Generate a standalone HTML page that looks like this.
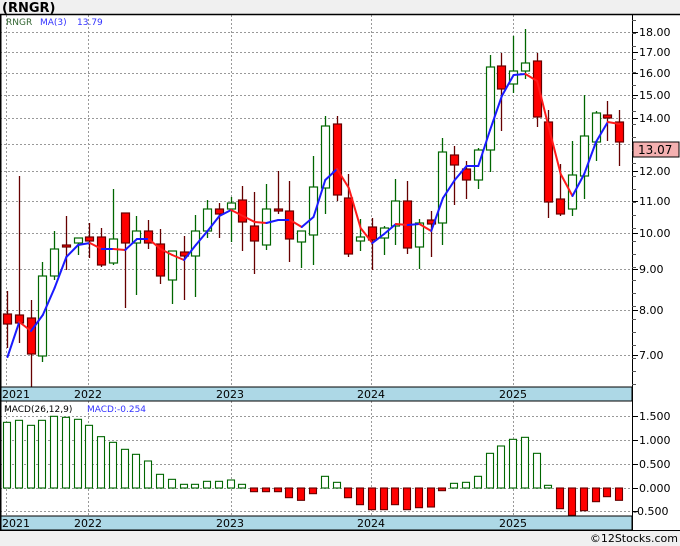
<!DOCTYPE html>
<html><head><meta charset="utf-8"><style>
body{margin:0;background:#f0f0f0;width:680px;height:546px;overflow:hidden;font-family:"Liberation Sans","DejaVu Sans",sans-serif}
svg{display:block}
</style></head><body>
<svg id="s" width="680" height="546" xmlns="http://www.w3.org/2000/svg" font-family="DejaVu Sans, Liberation Sans, sans-serif">
<rect x="0" y="0" width="680" height="546" fill="#f0f0f0"/>
<rect x="0" y="14" width="680" height="517" fill="#fff"/>
<text x="2" y="12" font-size="13" font-weight="bold" fill="#000">(RNGR)</text>
<g id="grid" stroke="#999" stroke-dasharray="2,2" stroke-width="1"></g>
<g id="cand"></g>
<g id="ma" stroke-width="2" fill="none"></g>
<g id="macd"></g>
<!-- bands -->
<rect x="0" y="387" width="632" height="14" fill="#add8e6" stroke="#000"/>
<rect x="0" y="516" width="632" height="14" fill="#add8e6" stroke="#000"/>
<g font-size="11" fill="#000">
<text x="2" y="398">2021</text><text x="74" y="398">2022</text><text x="216" y="398">2023</text><text x="357" y="398">2024</text><text x="499" y="398">2025</text>
<text x="2" y="527">2021</text><text x="74" y="527">2022</text><text x="216" y="527">2023</text><text x="357" y="527">2024</text><text x="499" y="527">2025</text>
</g>
<line x1="0" y1="14.5" x2="680" y2="14.5" stroke="#000" stroke-width="1.5"/>
<line x1="0.5" y1="14" x2="0.5" y2="530" stroke="#000" stroke-width="2"/>
<line x1="632.5" y1="14" x2="632.5" y2="531" stroke="#000"/>
<line x1="0" y1="530.5" x2="680" y2="530.5" stroke="#000"/>
<g id="ticks" stroke="#555"></g>
<g font-size="11" fill="#000">
<text x="639" y="36">18.00</text><text x="639" y="56">17.00</text><text x="639" y="77">16.00</text><text x="639" y="99">15.00</text><text x="639" y="122">14.00</text>
<text x="639" y="175">12.00</text><text x="639" y="205">11.00</text><text x="639" y="237">10.00</text><text x="639" y="273">9.00</text><text x="639" y="314">8.00</text><text x="639" y="359">7.00</text>
<text x="639" y="420">1.500</text><text x="639" y="444">1.000</text><text x="639" y="468">0.500</text><text x="639" y="492">0.000</text><text x="633" y="515">-0.500</text>
</g>
<rect x="633" y="142" width="46" height="15" fill="#f4b0b0" stroke="#000"/>
<text x="638" y="154" font-size="12" fill="#000">13.07</text>
<g font-size="9">
<text x="6" y="25" fill="#336633">RNGR</text><text x="40" y="25" fill="#3333ff">MA(3)</text><text x="77" y="25" fill="#3333ff">13.79</text>
<text x="4" y="412" fill="#000">MACD(26,12,9)</text><text x="87" y="412" fill="#3333ff">MACD:-0.254</text>
</g>
<text x="678" y="542" font-size="11" fill="#000" text-anchor="end">©12Stocks.com</text>
</svg>
<script>
var NS="http://www.w3.org/2000/svg";
function el(p,t,a){var e=document.createElementNS(NS,t);for(var k in a)e.setAttribute(k,a[k]);document.getElementById(p).appendChild(e);return e;}
[32,52,73,95,118,144,171,201,233,269,310,355,416,440,464,488,511].forEach(function(y){el("grid","line",{x1:0,y1:y+.5,x2:632,y2:y+.5});});
[6,88,231,371,513].forEach(function(x){el("grid","line",{x1:x+.5,y1:15,x2:x+.5,y2:387});el("grid","line",{x1:x+.5,y1:401,x2:x+.5,y2:516});});
for(var y=20;y<386;y+=13)el("ticks","line",{x1:632,y1:y+.5,x2:636,y2:y+.5});
[32,52,73,95,118,144,171,201,233,269,310,355,416,440,464,488,511].forEach(function(y){el("ticks","line",{x1:632,y1:y+.5,x2:638,y2:y+.5,stroke:"#000"});});
// candles: [col, top, bottom, wickTop, wickBot] ; col r/g
var C=[["r",314,324,291,348],["r",315,323,176,343],["r",318,354,300,387],["g",276,356,262,362],["g",249,276,231,280],["r",245,247,216,270],["g",238,243,238,255],["r",237,241,223,258],["r",237,265,228,267],["g",239,263,189,265],["r",213,243,213,308],["g",231,243,216,295],["r",231,243,220,249],["r",244,276,229,284],["g",251,280,251,304],["r",252,256,236,300],["g",231,256,215,297],["g",209,231,200,238],["r",209,214,203,238],["g",203,209,197,242],["r",200,222,186,251],["r",226,241,192,274],["g",209,245,184,250],["r",209,211,171,214],["r",211,239,181,262],["g",231,242,231,268],["g",187,235,156,265],["g",126,188,116,214],["r",124,195,116,201],["r",198,254,174,257],["g",237,241,219,251],["r",227,240,218,270],["g",228,238,226,255],["g",201,226,179,245],["r",201,248,181,254],["g",223,247,219,269],["r",220,224,211,257],["g",152,223,138,245],["r",155,165,146,205],["r",169,180,161,199],["g",150,180,148,189],["g",67,150,55,172],["r",66,89,53,131],["g",71,84,36,93],["g",63,71,29,79],["r",61,117,53,127],["r",122,202,110,218],["r",199,214,164,216],["g",175,209,141,216],["g",136,176,95,199],["g",113,142,111,161],["r",115,118,101,141],["r",122,142,110,166]];
function X(i){return 7+i*11.77;}
C.forEach(function(c,i){var x=Math.round(X(i));var g=c[0]=="g";var wc=g?"#006600":"#660000";
el("cand","line",{x1:x+.5,y1:c[3],x2:x+.5,y2:c[4],stroke:wc,"stroke-width":1.3});
el("cand","rect",{x:x-3.5,y:c[1],width:8,height:Math.max(2,c[2]-c[1]),fill:g?"#fff":"#ff0000",stroke:g?"#006600":"#660000","stroke-width":1.2});});
var M=[357,322,331,315,288,257,245,243,249,249,250,239,239,249,255,260,245,231,216,210,216,222,223,220,220,227,217,180,169,188,228,243,234,224,225,224,231,198,180,166,166,130,96,75,74,81,128,174,196,174,142,122,124];
for(var i=1;i<M.length;i++){el("ma","line",{x1:X(i-1)+.5,y1:M[i-1],x2:X(i)+.5,y2:M[i],stroke:M[i]>M[i-1]?"#ff1a1a":"#1a1aff","stroke-linecap":"round"});}
var D=[127,121,136,121,109,112,118,136,170,187,208,223,243,283,298,313,313,304,304,300,313,335,335,335,353,361,341,289,307,353,374,389,389,374,389,383,381,332,310,307,289,220,198,178,172,220,316,386,406,392,365,350,361];
D.forEach(function(v,i){var y=380+v/3,z=488;var x=Math.round(X(i));var top=Math.min(y,z),h=Math.max(1.5,Math.abs(y-z));var neg=y>z;
el("macd","rect",{x:x-3.5,y:top,width:7,height:h,fill:neg?"#ff0000":"#fff",stroke:neg?"#660000":"#006600","stroke-width":1.1});});
</script>
</body></html>
